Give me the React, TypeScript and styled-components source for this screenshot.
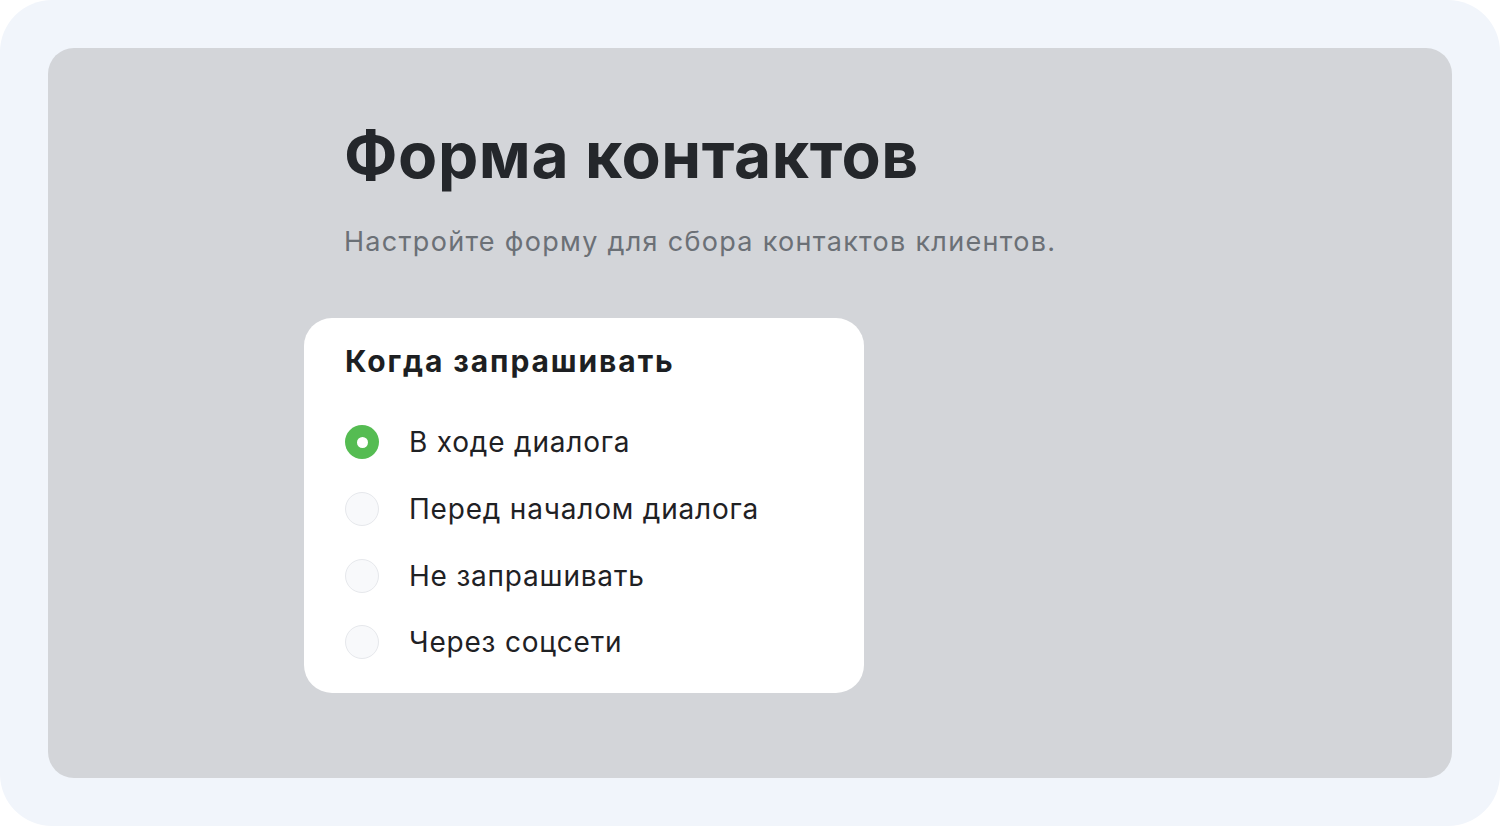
import React, { useState } from "react";
import styled, { createGlobalStyle } from "styled-components";

const Global = createGlobalStyle`
  html, body { margin: 0; padding: 0; background: #ffffff; }
  body { font-family: Inter, "Noto Sans", sans-serif; -webkit-font-smoothing: antialiased; }
`;

const Frame = styled.div`
  width: 1500px;
  height: 826px;
  box-sizing: border-box;
  padding: 48px;
  background: #f1f5fb;
  border-radius: 52px;
`;

const Panel = styled.div`
  height: 100%;
  box-sizing: border-box;
  background: #d3d5d9;
  border-radius: 26px;
  padding: 69px 0 0 256px;
  display: flex;
  flex-direction: column;
`;

const Header = styled.div`
  padding-left: 40px;
  display: flex;
  flex-direction: column;
  gap: 32px;
`;

const Title = styled.h1`
  margin: 0;
  font-size: 64px;
  line-height: 76px;
  font-weight: 700;
  color: #24272b;
  letter-spacing: 0.6px;
`;

const Subtitle = styled.p`
  margin: 0;
  font-size: 27px;
  line-height: 34px;
  color: #6b7076;
  font-weight: 400;
  letter-spacing: 1.3px;
`;

const Card = styled.div`
  margin-top: 59px;
  width: 560px;
  box-sizing: border-box;
  background: #ffffff;
  border-radius: 28px;
  padding: 23px 40px 17px 41px;
`;

const CardTitle = styled.h2`
  margin: 0 0 28px;
  font-size: 30px;
  line-height: 40px;
  font-weight: 700;
  color: #1d1f22;
  letter-spacing: 1.9px;
`;

const Options = styled.div`
  display: flex;
  flex-direction: column;
`;

const Option = styled.label`
  display: flex;
  align-items: center;
  gap: 30px;
  height: 66.7px;
  cursor: pointer;
  font-size: 28px;
  color: #1f2124;
  letter-spacing: 0.8px;
`;

const Dot = styled.span<{ $on: boolean }>`
  width: 34px;
  height: 34px;
  box-sizing: border-box;
  border-radius: 50%;
  flex: none;
  display: flex;
  align-items: center;
  justify-content: center;
  background: ${(p) => (p.$on ? "#55bc52" : "#f8f9fb")};
  border: ${(p) => (p.$on ? "none" : "1.5px solid #e6e8ec")};
  &::after {
    content: "";
    display: ${(p) => (p.$on ? "block" : "none")};
    width: 11px;
    height: 11px;
    border-radius: 50%;
    background: #ffffff;
  }
`;

const options = [
  "В ходе диалога",
  "Перед началом диалога",
  "Не запрашивать",
  "Через соцсети",
];

export default function App() {
  const [sel, setSel] = useState(0);
  return (
    <>
      <Global />
      <Frame>
        <Panel>
          <Header>
            <Title>Форма контактов</Title>
            <Subtitle>Настройте форму для сбора контактов клиентов.</Subtitle>
          </Header>
          <Card>
            <CardTitle>Когда запрашивать</CardTitle>
            <Options>
              {options.map((o, i) => (
                <Option key={o} onClick={() => setSel(i)}>
                  <Dot $on={sel === i} />
                  {o}
                </Option>
              ))}
            </Options>
          </Card>
        </Panel>
      </Frame>
    </>
  );
}
